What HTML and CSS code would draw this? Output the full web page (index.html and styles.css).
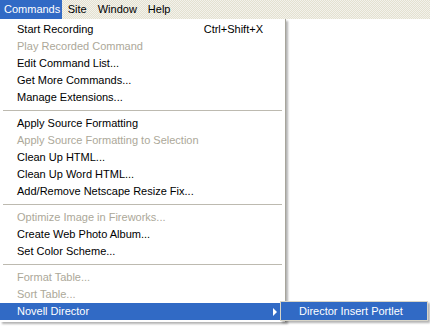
FILE: index.html
```html
<!DOCTYPE html>
<html lang="en">

<head>
    <meta charset="UTF-8">
    <title>Commands menu</title>
    <link rel="stylesheet" href="styles.css">
</head>

<body class="page">
    <!-- barra de menus -->
    <div class="menubar">
        <span class="menubar__item menubar__item--open">Commands</span>
        <span class="menubar__item">Site</span>
        <span class="menubar__item">Window</span>
        <span class="menubar__item">Help</span>
    </div>

    <!-- menu desplegado -->
    <div class="menu">
        <div class="menu__item"><span>Start Recording</span><span>Ctrl+Shift+X</span></div>
        <div class="menu__item menu__item--off">Play Recorded Command</div>
        <div class="menu__item">Edit Command List...</div>
        <div class="menu__item">Get More Commands...</div>
        <div class="menu__item">Manage Extensions...</div>
        <div class="menu__sep"></div>
        <div class="menu__item">Apply Source Formatting</div>
        <div class="menu__item menu__item--off">Apply Source Formatting to Selection</div>
        <div class="menu__item">Clean Up HTML...</div>
        <div class="menu__item">Clean Up Word HTML...</div>
        <div class="menu__item">Add/Remove Netscape Resize Fix...</div>
        <div class="menu__sep"></div>
        <div class="menu__item menu__item--off">Optimize Image in Fireworks...</div>
        <div class="menu__item">Create Web Photo Album...</div>
        <div class="menu__item">Set Color Scheme...</div>
        <div class="menu__sep"></div>
        <div class="menu__item menu__item--off">Format Table...</div>
        <div class="menu__item menu__item--off">Sort Table...</div>
        <div class="menu__item menu__item--active">
            <span>Novell Director</span><span class="arrow"></span>
            <!-- submenu -->
            <div class="submenu">
                <div class="submenu__item">Director Insert Portlet</div>
            </div>
        </div>
    </div>
</body>

</html>
```

FILE: styles.css
```css
* {
    padding: 0;
    margin: 0;
    box-sizing: border-box;
}

.page {
    width: 430px;
    height: 328px;
    overflow: hidden;
    background-color: #fff;
    font-family: "Liberation Sans", Arial, sans-serif;
    font-size: 11px;
    color: #000;
    position: relative;
}

/* Barra */
.menubar {
    display: flex;
    height: 19px;
    line-height: 19px;
    background: repeating-conic-gradient(#e4e1d0 0 25%, #f3f2ec 0 50%) 0 0 / 2px 2px;
}

.menubar__item {
    padding: 0 5.5px;
}

.menubar__item--open {
    padding: 0 2px 0 4px;
    background-color: #316ac5;
    color: #fff;
}

/* Menu */
.menu {
    position: absolute;
    left: 0;
    top: 19px;
    width: 286px;
    padding: 2px 0 2px;
    background-color: #fff;
    border-right: 1px solid #a7a59c;
    box-shadow: 2px 2px 2px rgba(0, 0, 0, 0.3);
}

.menu__item {
    position: relative;
    display: flex;
    justify-content: space-between;
    align-items: center;
    height: 17px;
    line-height: 17px;
    padding: 0 22px 0 17px;
    white-space: nowrap;
}

.menu__item--off {
    color: #aca899;
}

.menu__item--active {
    background-color: #316ac5;
    color: #fff;
    padding-right: 8px;
}

.arrow {
    width: 0;
    height: 0;
    border-left: 4px solid #fff;
    border-top: 4px solid transparent;
    border-bottom: 4px solid transparent;
}

.menu__sep {
    height: 9px;
    padding: 4px 3px;
}

.menu__sep::before {
    content: "";
    display: block;
    height: 1px;
    background-color: #bdbab0;
}

/* Submenu */
.submenu {
    position: absolute;
    left: 280px;
    top: -2px;
    width: 148px;
    height: 20px;
    border: 1px solid #d8d5c8;
    background-color: #316ac5;
    box-shadow: 2px 2px 2px rgba(0, 0, 0, 0.3);
}

.submenu__item {
    line-height: 18px;
    padding-left: 18px;
    color: #fff;
}
```
